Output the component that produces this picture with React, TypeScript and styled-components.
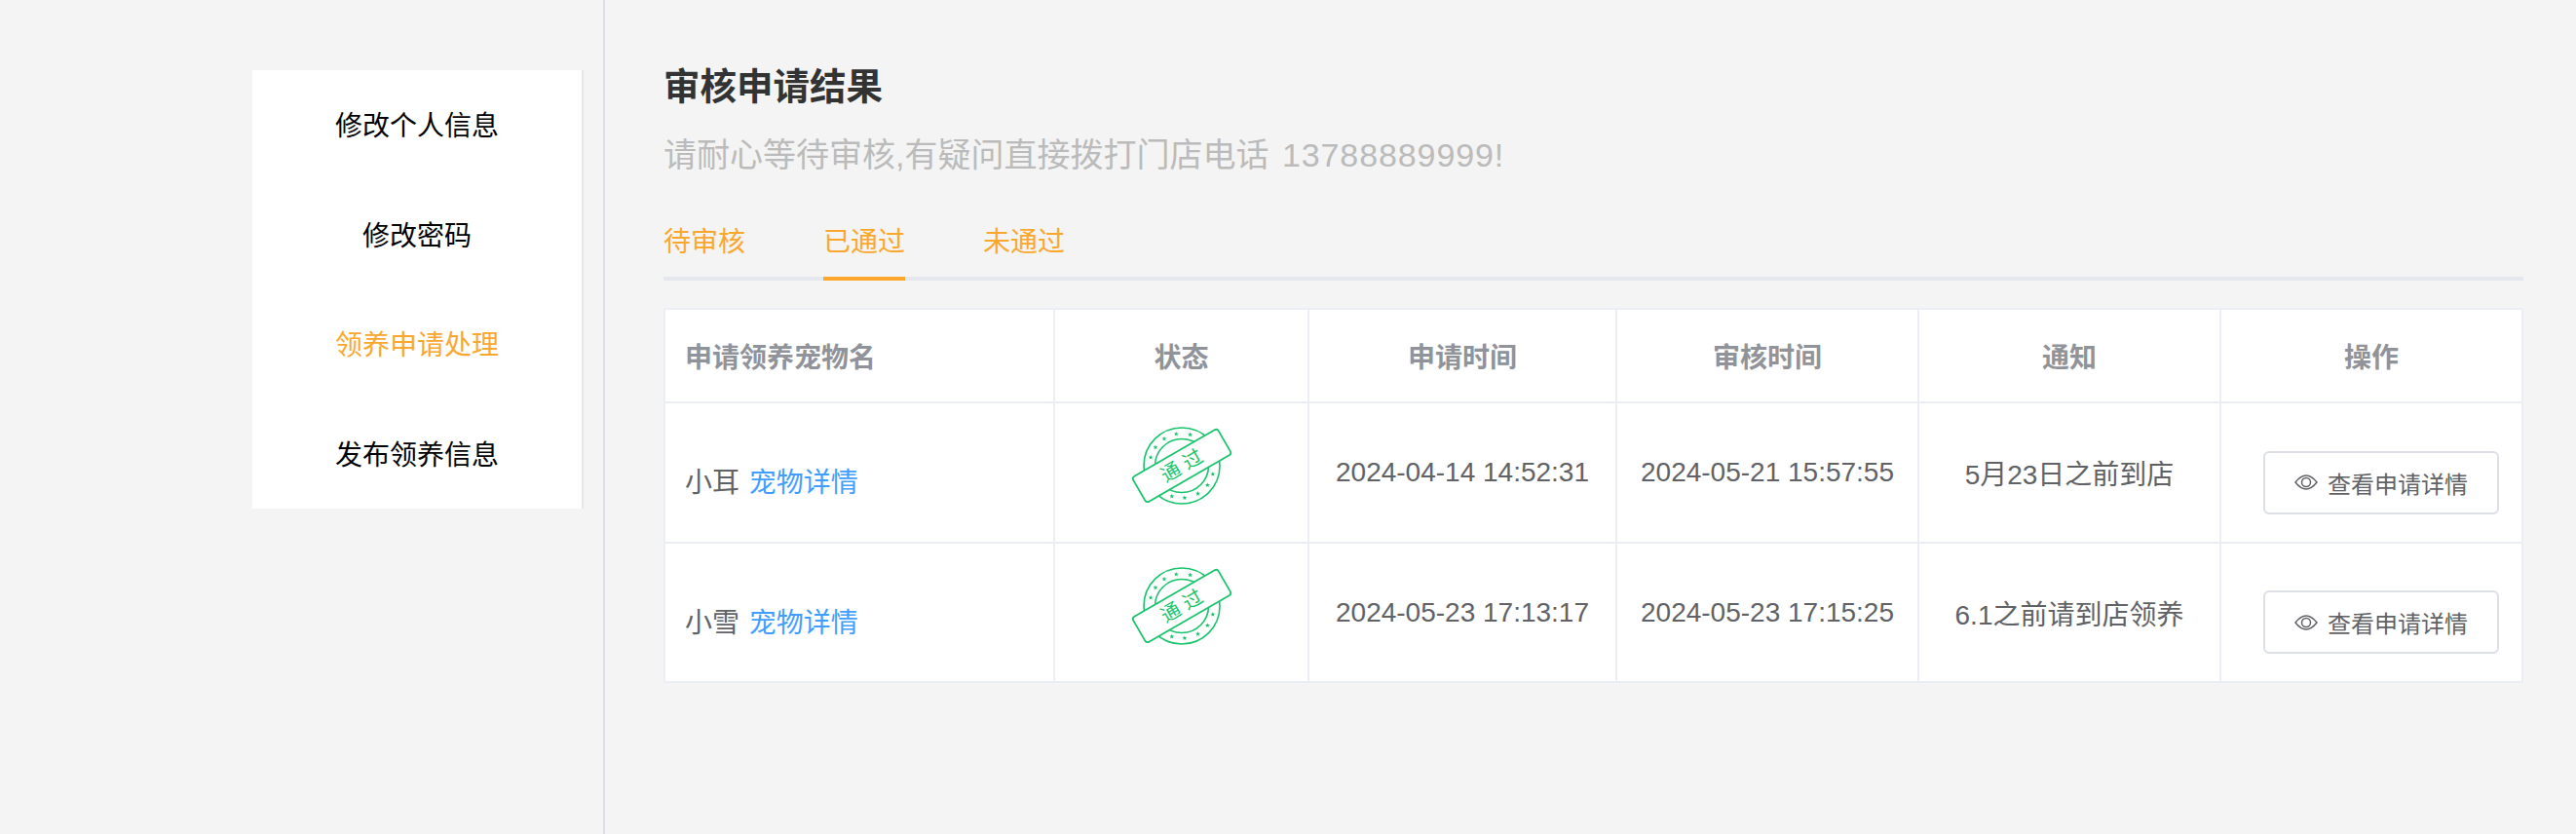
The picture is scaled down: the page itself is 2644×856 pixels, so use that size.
import React from "react";
import styled, { createGlobalStyle } from "styled-components";

const GlobalStyle = createGlobalStyle`
    html, body {
        margin: 0;
        padding: 0;
        background: #f4f4f4;
        font-family: "Liberation Sans", "Noto Sans CJK SC", sans-serif;
    }
`;

const menuItems = ["修改个人信息", "修改密码", "领养申请处理", "发布领养信息"];
const tabs = ["待审核", "已通过", "未通过"];
const columns = [
    { title: "申请领养宠物名", width: 400, left: true },
    { title: "状态", width: 261 },
    { title: "申请时间", width: 316 },
    { title: "审核时间", width: 310 },
    { title: "通知", width: 310 },
    { title: "操作", width: 310 },
];
const rows = [
    { name: "小耳", applied: "2024-04-14 14:52:31", reviewed: "2024-05-21 15:57:55", notice: "5月23日之前到店" },
    { name: "小雪", applied: "2024-05-23 17:13:17", reviewed: "2024-05-23 17:15:25", notice: "6.1之前请到店领养" },
];

const starAngles = [195, 215, 237, 260, 285, 15, 37, 60, 85, 108];

const starPoints = (cx: number, cy: number) =>
    Array.from({ length: 10 }, (_, i) => {
        const r = i % 2 === 0 ? 2.600 : 1.100;
        const a = (Math.PI / 5) * i - Math.PI / 2;
        return `${(cx + r * Math.cos(a)).toFixed(2)},${(cy + r * Math.sin(a)).toFixed(2)}`;
    }).join(" ");

const PassStamp: React.FC = () => (
    <StampSvg width="108" height="84" viewBox="0 0 108 84" fill="none" stroke="#19c46c" strokeWidth="1.600">
        <circle cx="54" cy="42" r="39" />
        <circle cx="54" cy="42" r="27.500" />
        <g fill="#19c46c" stroke="none">
            {starAngles.map(angle => {
                const a = (angle * Math.PI) / 180;
                return <polygon key={angle} points={starPoints(54 + 33 * Math.cos(a), 42 + 33 * Math.sin(a))} />;
            })}
        </g>
        <g transform="rotate(-30 54 42)">
            <rect x="3.500" y="27" width="101" height="30" rx="3" fill="#fff" strokeWidth="1.800" />
            <text x="57" y="49" textAnchor="middle" fill="#19c46c" stroke="none" fontSize="20" letterSpacing="6">
                通过
            </text>
        </g>
    </StampSvg>
);

const EyeIcon: React.FC = () => (
    <svg width="24" height="16" viewBox="0 0 24 16" fill="none" stroke="#606266" strokeWidth="1.500">
        <path d="M1 8 C5 3 8.500 1 12 1 C15.500 1 19 3 23 8 C19 13 15.500 15 12 15 C8.500 15 5 13 1 8 Z" />
        <circle cx="12" cy="8" r="4.500" />
    </svg>
);

export default function App() {
    return (
        <Page>
            <GlobalStyle />
            <Sidebar>
                <Menu>
                    {menuItems.map((item, i) => (
                        <MenuItem key={item} $active={i === 2}>
                            {item}
                        </MenuItem>
                    ))}
                </Menu>
            </Sidebar>
            <Main>
                <Title>审核申请结果</Title>
                <Subtitle>
                    请耐心等待审核,有疑问直接拨打门店电话 <Phone>13788889999!</Phone>
                </Subtitle>
                <TabBar>
                    {tabs.map((tab, i) => (
                        <Tab key={tab} $active={i === 1}>
                            {tab}
                        </Tab>
                    ))}
                </TabBar>
                <Table>
                    <colgroup>
                        {columns.map(col => (
                            <col key={col.title} width={col.width} />
                        ))}
                    </colgroup>
                    <thead>
                        <tr>
                            {columns.map(col => (
                                <HeadCell key={col.title} $left={col.left}>
                                    {col.title}
                                </HeadCell>
                            ))}
                        </tr>
                    </thead>
                    <tbody>
                        {rows.map(row => (
                            <tr key={row.name}>
                                <NameCell>
                                    {row.name} <PetLink>宠物详情</PetLink>
                                </NameCell>
                                <StampCell>
                                    <PassStamp />
                                </StampCell>
                                <TextCell>{row.applied}</TextCell>
                                <TextCell>{row.reviewed}</TextCell>
                                <TextCell>{row.notice}</TextCell>
                                <ActionCell>
                                    <DetailButton>
                                        <EyeIcon />
                                        查看申请详情
                                    </DetailButton>
                                </ActionCell>
                            </tr>
                        ))}
                    </tbody>
                </Table>
            </Main>
        </Page>
    );
}

const Page = styled.div`
    display: flex;
    width: 2644px;
    height: 856px;
    background: #f4f4f4;
    overflow: hidden;
`;

const Sidebar = styled.aside`
    box-sizing: border-box;
    width: 621px;
    flex-shrink: 0;
    padding: 72px 20px 0 259px;
    border-right: 2px solid #dcdfe6;
`;

const Menu = styled.ul`
    margin: 0;
    padding: 0;
    list-style: none;
    background: #fff;
    border-right: 2px solid #e6e6e6;
`;

const MenuItem = styled.li<{ $active?: boolean }>`
    height: 112.500px;
    line-height: 116px;
    text-align: center;
    font-size: 28px;
    color: ${props => (props.$active ? "#fba72e" : "#000")};
`;

const Main = styled.main`
    box-sizing: border-box;
    width: 1970px;
    padding: 64px 0 0 60px;
`;

const Title = styled.h2`
    margin: 0;
    font-size: 37.500px;
    line-height: 50px;
    font-weight: 700;
    color: #333;
`;

const Subtitle = styled.p`
    margin: 21px 0 0;
    font-size: 34px;
    line-height: 48px;
    color: #bbb;
`;

const Phone = styled.span`
    margin-left: 4px;
    letter-spacing: 0.900px;
`;

const TabBar = styled.div`
    display: flex;
    gap: 80px;
    width: 1909px;
    margin-top: 29px;
    border-bottom: 4px solid #e4e7ed;
`;

const Tab = styled.div<{ $active?: boolean }>`
    height: 72px;
    line-height: 74px;
    margin-bottom: -4px;
    font-size: 28px;
    color: #fba72e;
    border-bottom: 4px solid ${props => (props.$active ? "#fba72e" : "transparent")};
`;

const Table = styled.table`
    table-layout: fixed;
    width: 1907px;
    margin-top: 28px;
    border-collapse: collapse;
    background: #fff;
    border: 2px solid #ebeef5;
`;

const cellBorder = "2px solid #ebeef5";

const HeadCell = styled.th<{ $left?: boolean }>`
    box-sizing: border-box;
    height: 96px;
    padding: 0 ${props => (props.$left ? "20px" : "0")};
    border: ${cellBorder};
    text-align: ${props => (props.$left ? "left" : "center")};
    font-size: 28px;
    font-weight: 700;
    color: #909399;
`;

const BodyCell = styled.td`
    box-sizing: border-box;
    height: 143px;
    padding: 0;
    border: ${cellBorder};
    font-size: 28px;
    color: #606266;

    tr:first-child > & {
        height: 144px;
    }
`;

const NameCell = styled(BodyCell)`
    padding: 16px 20px 0;
`;

const StampCell = styled(BodyCell)`
    padding-bottom: 14px;
    text-align: center;
`;

const StampSvg = styled.svg`
    display: inline-block;
    vertical-align: middle;
`;

const TextCell = styled(BodyCell)`
    text-align: center;
`;

const ActionCell = styled(BodyCell)`
    padding: 20px 24px 0 43px;
`;

const PetLink = styled.a`
    margin-left: 2px;
    color: #409eff;
`;

const DetailButton = styled.button`
    box-sizing: border-box;
    display: flex;
    align-items: center;
    justify-content: center;
    gap: 10px;
    width: 242px;
    height: 65px;
    padding: 0;
    background: #fff;
    border: 2px solid #dcdfe6;
    border-radius: 6px;
    font-family: inherit;
    font-size: 24px;
    color: #606266;
`;
